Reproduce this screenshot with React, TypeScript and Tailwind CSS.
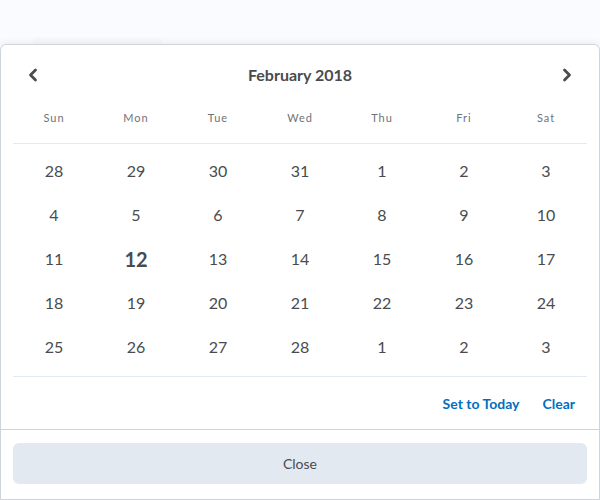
import React from 'react';

const weekdays = ['Sun', 'Mon', 'Tue', 'Wed', 'Thu', 'Fri', 'Sat'];

const weeks: number[][] = [
  [28, 29, 30, 31, 1, 2, 3],
  [4, 5, 6, 7, 8, 9, 10],
  [11, 12, 13, 14, 15, 16, 17],
  [18, 19, 20, 21, 22, 23, 24],
  [25, 26, 27, 28, 1, 2, 3],
];

function Chevron({ dir }: { dir: 'left' | 'right' }) {
  return (
    <svg width="10" height="14" viewBox="0 0 10 14" aria-hidden="true">
      <polyline
        points={dir === 'left' ? '7.5,2 2.5,7 7.5,12' : '2.5,2 7.5,7 2.5,12'}
        fill="none"
        stroke="#494c4e"
        strokeWidth="2.8"
        strokeLinecap="round"
        strokeLinejoin="round"
      />
    </svg>
  );
}

export default function App() {
  return (
    <div
      className="w-[600px] h-[500px] bg-[#f9fbff] flex flex-col overflow-hidden"
      style={{ fontFamily: 'Lato, "Noto Sans", sans-serif' }}
    >
      <div className="h-[44px] shrink-0 flex items-end pl-[33px]">
        <div className="w-[129px] h-[7px] rounded-t-[4px] bg-[#f6f8fc]" />
      </div>

      <div className="flex-1 flex flex-col bg-white border border-[#cdd5dc] rounded-t-[6px] shadow-[0_-2px_6px_rgba(0,0,0,0.06)]">
        <div className="px-[12px]">
          <div className="h-[60px] flex items-center justify-between px-[15px]">
            <button type="button" aria-label="Previous month" className="flex items-center">
              <Chevron dir="left" />
            </button>
            <span className="text-[16px] font-bold text-[#494c4e]">February 2018</span>
            <button type="button" aria-label="Next month" className="flex items-center">
              <Chevron dir="right" />
            </button>
          </div>

          <div className="grid grid-cols-7 h-[26px] items-center">
            {weekdays.map((d) => (
              <span key={d} className="text-center text-[11px] tracking-[1px] text-[#6e7376]">
                {d}
              </span>
            ))}
          </div>

          <div className="mt-[12px] border-t border-[#e3e9f1]" />

          <div className="pt-[5px] pb-[7px]">
            {weeks.map((w, i) => (
              <div key={i} className="grid grid-cols-7 h-[44px] items-center">
                {w.map((n, j) => {
                  const today = i === 2 && n === 12;
                  return (
                    <span
                      key={j}
                      className={
                        today
                          ? 'text-center text-[20px] font-bold text-[#494c4e]'
                          : 'text-center text-[16px] text-[#494c4e]'
                      }
                    >
                      {n}
                    </span>
                  );
                })}
              </div>
            ))}
          </div>

          <div className="border-t border-[#e3e9f1]" />

          <div className="h-[52px] flex items-center justify-end gap-[23px] pr-[12px]">
            <button type="button" className="text-[14px] font-bold text-[#006fbf]">
              Set to Today
            </button>
            <button type="button" className="text-[14px] font-bold text-[#006fbf]">
              Clear
            </button>
          </div>
        </div>

        <div className="border-t border-[#cdd5dc] px-[12px] pt-[13px]">
          <button
            type="button"
            className="w-full h-[41px] rounded-[6px] bg-[#e3e9f1] text-[14px] text-[#494c4e]"
          >
            Close
          </button>
        </div>
      </div>
    </div>
  );
}
